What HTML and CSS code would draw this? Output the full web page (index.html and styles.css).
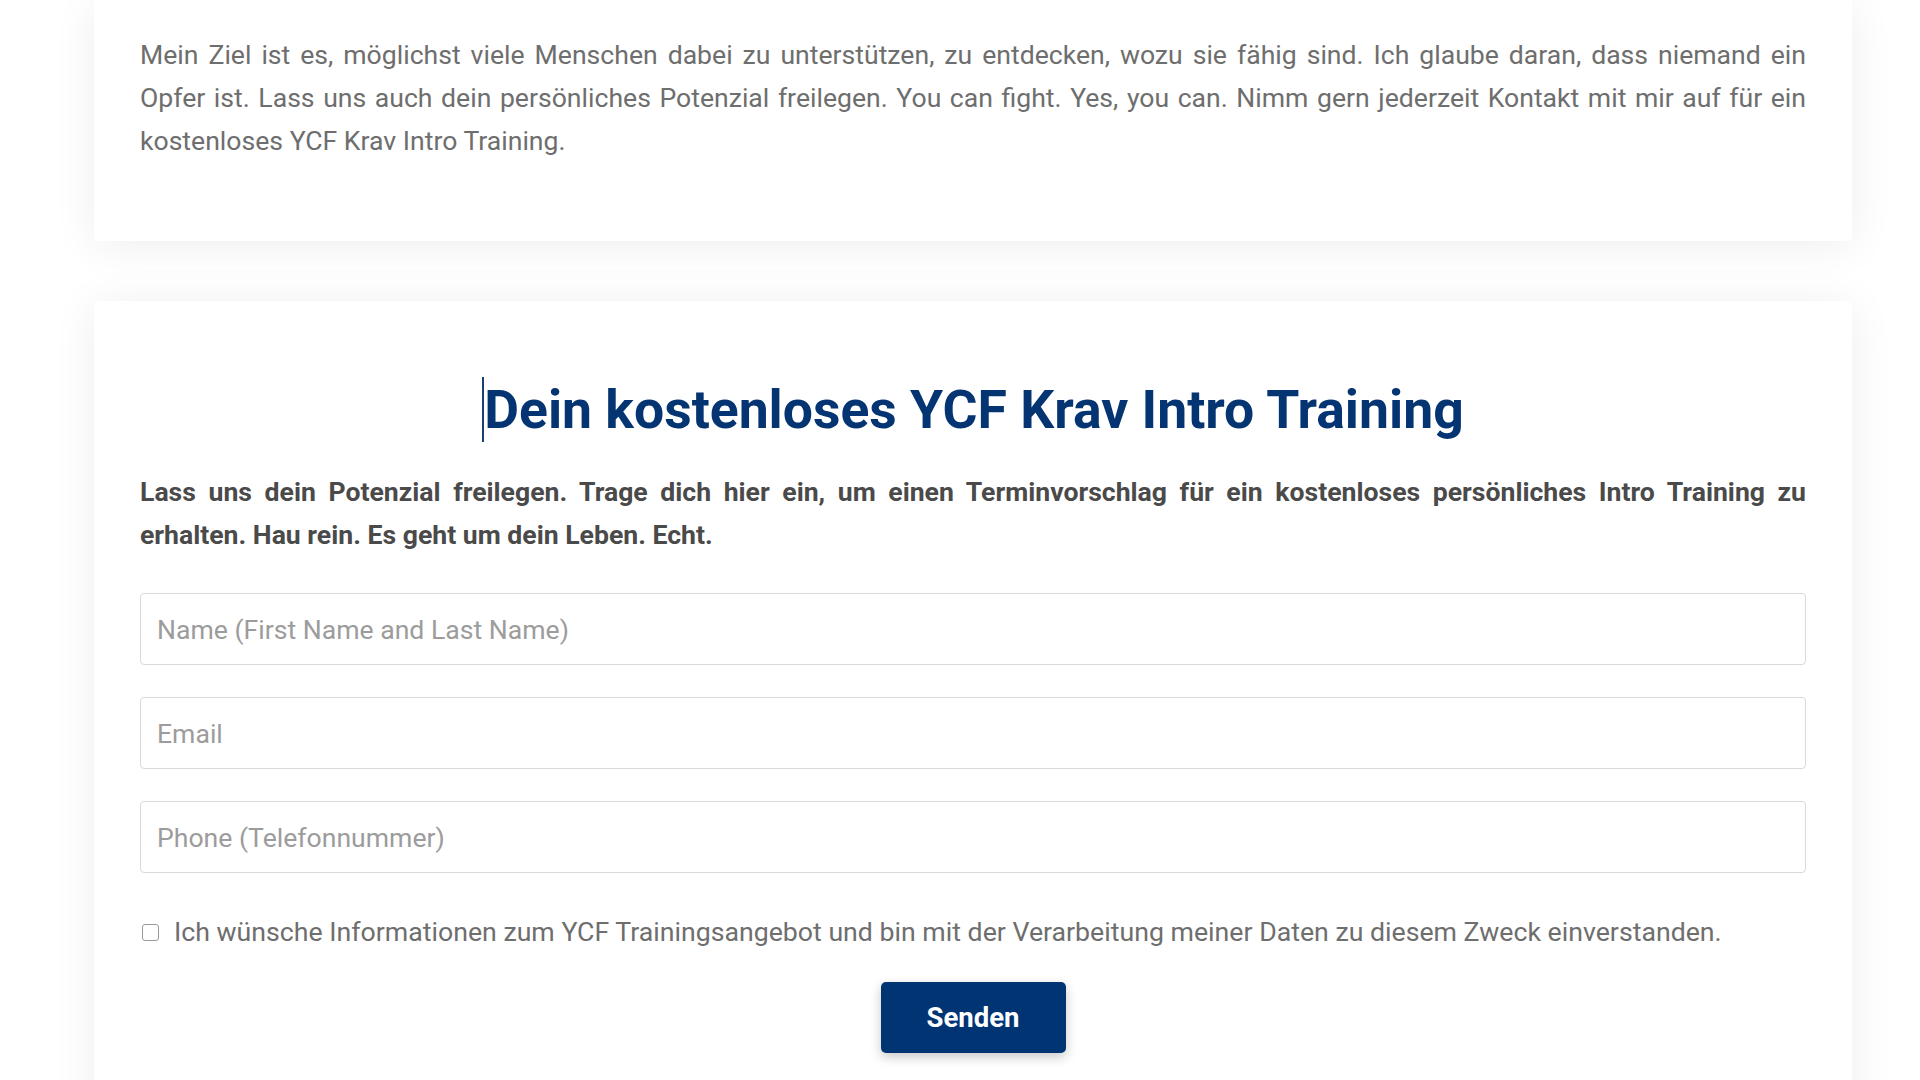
FILE: index.html
```html
<!DOCTYPE html>
<html>
<head>
<title>YCF Krav Intro Training</title>
<link rel="stylesheet" href="styles.css">
</head>
<body>

<div class="page">
  <div class="card cardIntro">
    <p class="text">Mein Ziel ist es, möglichst viele Menschen dabei zu unterstützen, zu entdecken, wozu sie fähig sind. Ich glaube daran, dass niemand ein Opfer ist. Lass uns auch dein persönliches Potenzial freilegen. You can fight. Yes, you can. Nimm gern jederzeit Kontakt mit mir auf für ein kostenloses YCF Krav Intro Training.</p>
  </div>

  <div class="card cardForm">
    <h2 class="title"><span class="caret">Dein kostenloses YCF Krav Intro Training</span></h2>
    <p class="lead">Lass uns dein Potenzial freilegen. Trage dich hier ein, um einen Terminvorschlag für ein kostenloses persönliches Intro Training zu erhalten. Hau rein. Es geht um dein Leben. Echt.</p>

    <form class="form" action="javascript:void(0)">
      <input type="text" class="field" placeholder="Name (First Name and Last Name)" />
      <input type="text" class="field" placeholder="Email" />
      <input type="text" class="field" placeholder="Phone (Telefonnummer)" />
      <label class="consent">
        <input type="checkbox" class="check" />
        <span>Ich wünsche Informationen zum YCF Trainingsangebot und bin mit der Verarbeitung meiner Daten zu diesem Zweck einverstanden.</span>
      </label>
      <div class="actions">
        <button type="submit" class="send">Senden</button>
      </div>
    </form>
  </div>
</div>

</body>
</html>
```

FILE: styles.css
```css
body {
  margin: 0;
  background-color: #FFFFFF;
  font-family: Roboto, "Liberation Sans", sans-serif;
  overflow: hidden;
}
.page {
  height: 1080px;
  overflow: hidden;
  padding: 0 68px 0 94px;
  display: flex;
  flex-direction: column;
  gap: 60px;
}
.card {
  flex: none;
  background-color: #FFFFFF;
  border-radius: 4px;
  box-shadow: 0 4px 45px rgba(0, 0, 0, 0.07);
  padding: 0 46px;
}
.cardIntro {
  padding-top: 33px;
  padding-bottom: 79px;
  border-radius: 0 0 4px 4px;
}
.cardForm {
  padding-top: 76px;
  padding-bottom: 120px;
}
.text, .lead {
  margin: 0;
  font-size: 26.6px;
  line-height: 43px;
  text-align: justify;
  color: #6E6E6E;
}
.lead {
  font-weight: bold;
  color: #4A4A4A;
}
.title {
  margin: 0 0 28px 0;
  text-align: center;
  font-size: 53.5px;
  line-height: 65px;
  font-weight: bold;
  color: #043472;
}
.caret {
  display: inline-block;
  border-left: 2px solid #1C3F73;
}
.form {
  margin-top: 37px;
  display: flex;
  flex-direction: column;
  gap: 32px;
}
.field {
  box-sizing: border-box;
  height: 72px;
  width: 100%;
  margin: 0;
  padding: 0 16px;
  border: 1px solid #DADADA;
  border-radius: 4px;
  font-family: Roboto, "Liberation Sans", sans-serif;
  font-size: 26.6px;
  color: #555555;
  outline: none;
}
.field::placeholder {
  color: #9C9C9C;
}
.consent {
  display: flex;
  align-items: center;
  gap: 15px;
  margin-top: 9px;
  font-size: 26.7px;
  line-height: 36px;
  color: #6E6E6E;
}
.check {
  appearance: none;
  -webkit-appearance: none;
  flex: none;
  box-sizing: border-box;
  width: 17px;
  height: 17px;
  margin: 0 0 0 2px;
  border: 1.5px solid #9A9A9A;
  border-radius: 3px;
  background-color: #FFFFFF;
}
.actions {
  display: flex;
  justify-content: center;
}
.send {
  width: 185px;
  height: 71px;
  border: 0;
  border-radius: 5px;
  background-color: #003473;
  color: #FFFFFF;
  font-family: Roboto, "Liberation Sans", sans-serif;
  font-size: 27.5px;
  font-weight: bold;
  box-shadow: 0 4px 12px rgba(0, 0, 0, 0.22);
  cursor: pointer;
}
```
